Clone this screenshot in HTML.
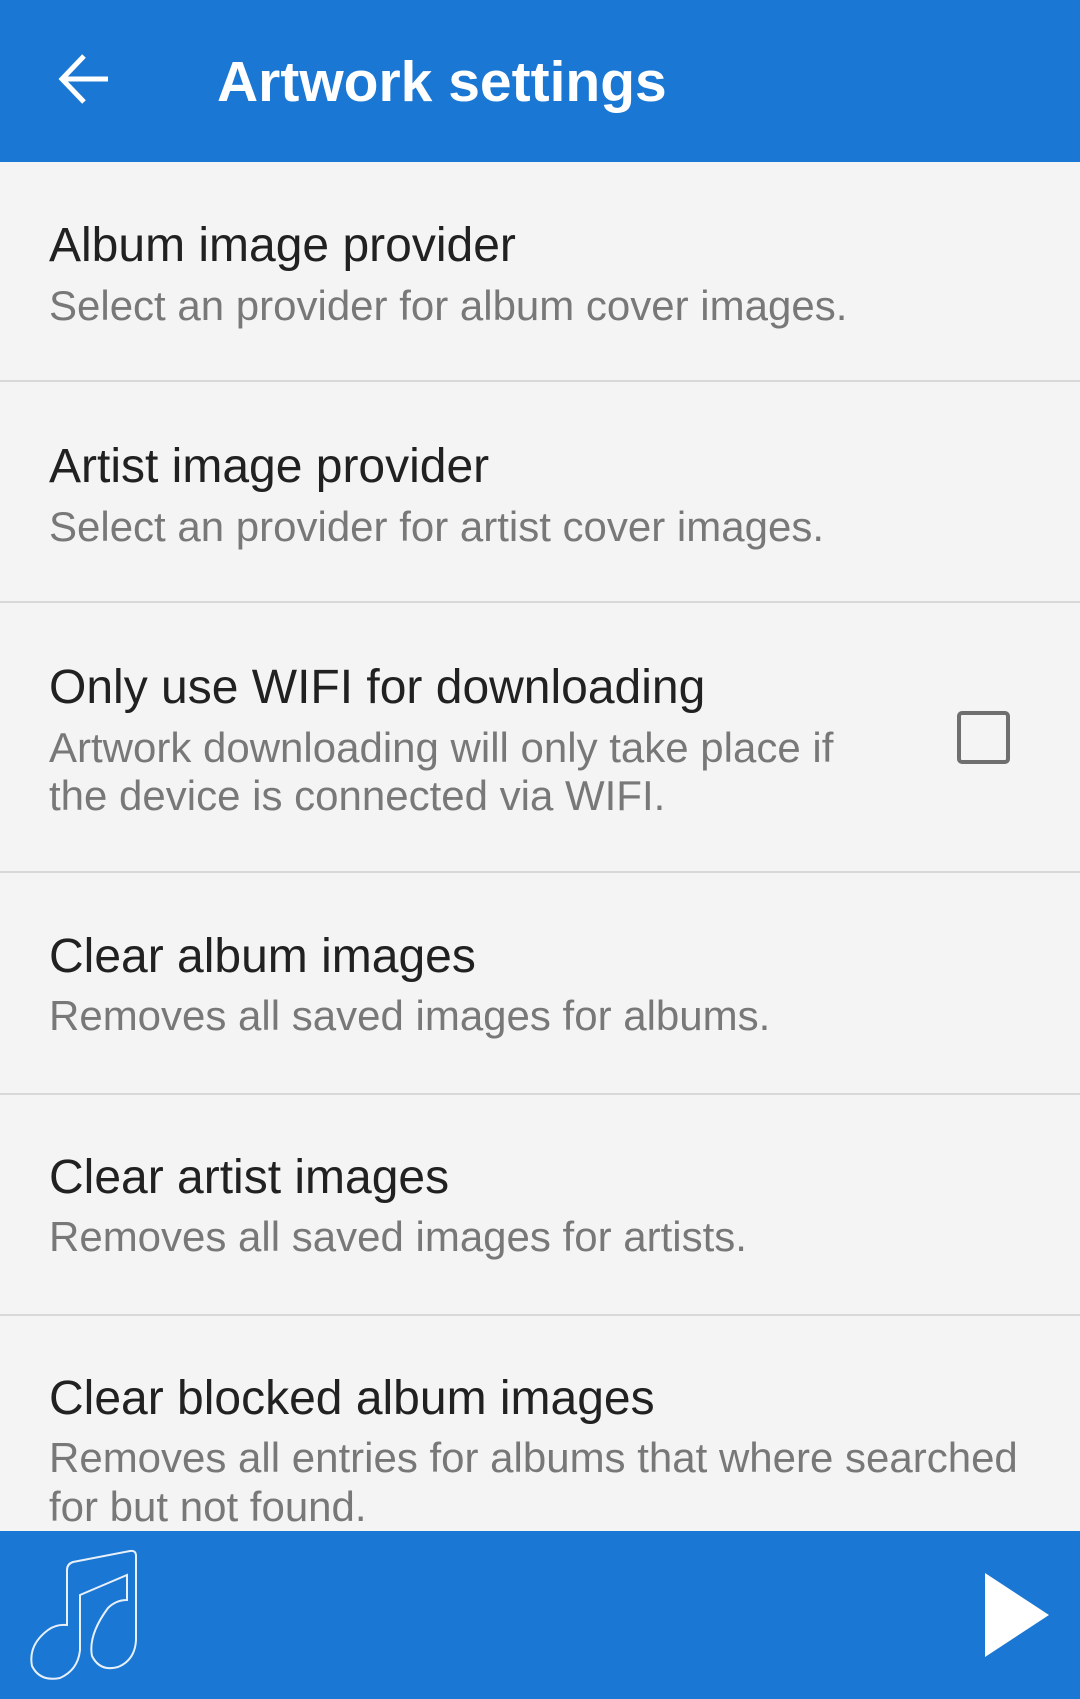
<!DOCTYPE html>
<html><head><meta charset="utf-8">
<style>
html,body{margin:0;padding:0}
body{width:1080px;height:1699px;position:relative;overflow:hidden;background:#f4f4f4;font-family:"Liberation Sans",sans-serif}
.hdr{position:absolute;left:0;top:0;width:1080px;height:162px;background:#1a77d3}
.t{position:absolute;left:49px;font-size:48px;line-height:48px;color:#212121;white-space:nowrap}
.s{position:absolute;left:49px;font-size:42px;line-height:48px;color:#787878;white-space:nowrap}
.d{position:absolute;left:0;width:1080px;height:2px;background:#d8d8d8}
.bar{position:absolute;left:0;top:1531px;width:1080px;height:168px;background:#1a77d3}
</style></head><body>
<div class="hdr">
<svg width="1080" height="162" style="position:absolute;left:0;top:0">
<path d="M108,79 L62,79 M84,56 L62,79 L84,102" stroke="#fff" stroke-width="5" fill="none"/>
</svg>
<div style="position:absolute;left:217px;top:54px;font-size:57px;line-height:57px;font-weight:bold;color:#fff;white-space:nowrap">Artwork settings</div>
</div>

<div class="t" style="top:222px">Album image provider</div>
<div class="s" style="top:282px">Select an provider for album cover images.</div>
<div class="d" style="top:380px"></div>

<div class="t" style="top:443px">Artist image provider</div>
<div class="s" style="top:503px">Select an provider for artist cover images.</div>
<div class="d" style="top:601px"></div>

<div class="t" style="top:664px">Only use WIFI for downloading</div>
<div class="s" style="top:724px">Artwork downloading will only take place if</div>
<div class="s" style="top:772px">the device is connected via WIFI.</div>
<div style="position:absolute;left:957px;top:711px;width:53px;height:53px;border:4px solid #6f6f6f;border-radius:5px;box-sizing:border-box"></div>
<div class="d" style="top:871px"></div>

<div class="t" style="top:933px">Clear album images</div>
<div class="s" style="top:992px">Removes all saved images for albums.</div>
<div class="d" style="top:1093px"></div>

<div class="t" style="top:1154px">Clear artist images</div>
<div class="s" style="top:1213px">Removes all saved images for artists.</div>
<div class="d" style="top:1314px"></div>

<div class="t" style="top:1375px">Clear blocked album images</div>
<div class="s" style="top:1434px">Removes all entries for albums that where searched</div>
<div class="s" style="top:1483px">for but not found.</div>

<div class="bar"></div>
<svg width="1080" height="1699" style="position:absolute;left:0;top:0">
<path d="M67,1625 L67,1570 Q67,1564 73,1562 L130,1551 Q136,1550 136,1556 L136,1640 Q135,1660 118,1667 Q100,1672 92,1656 Q88,1635 108,1608 Q116,1600 127,1600 L127,1575 L80,1595 L80,1650 Q78,1670 60,1678 Q40,1682 32,1666 Q28,1645 48,1630 Q56,1624 67,1625 Z" stroke="#e8f0fa" stroke-width="2" fill="none"/>
<polygon points="985,1573 1049,1615 985,1657" fill="#fff"/>
</svg>
</body></html>
